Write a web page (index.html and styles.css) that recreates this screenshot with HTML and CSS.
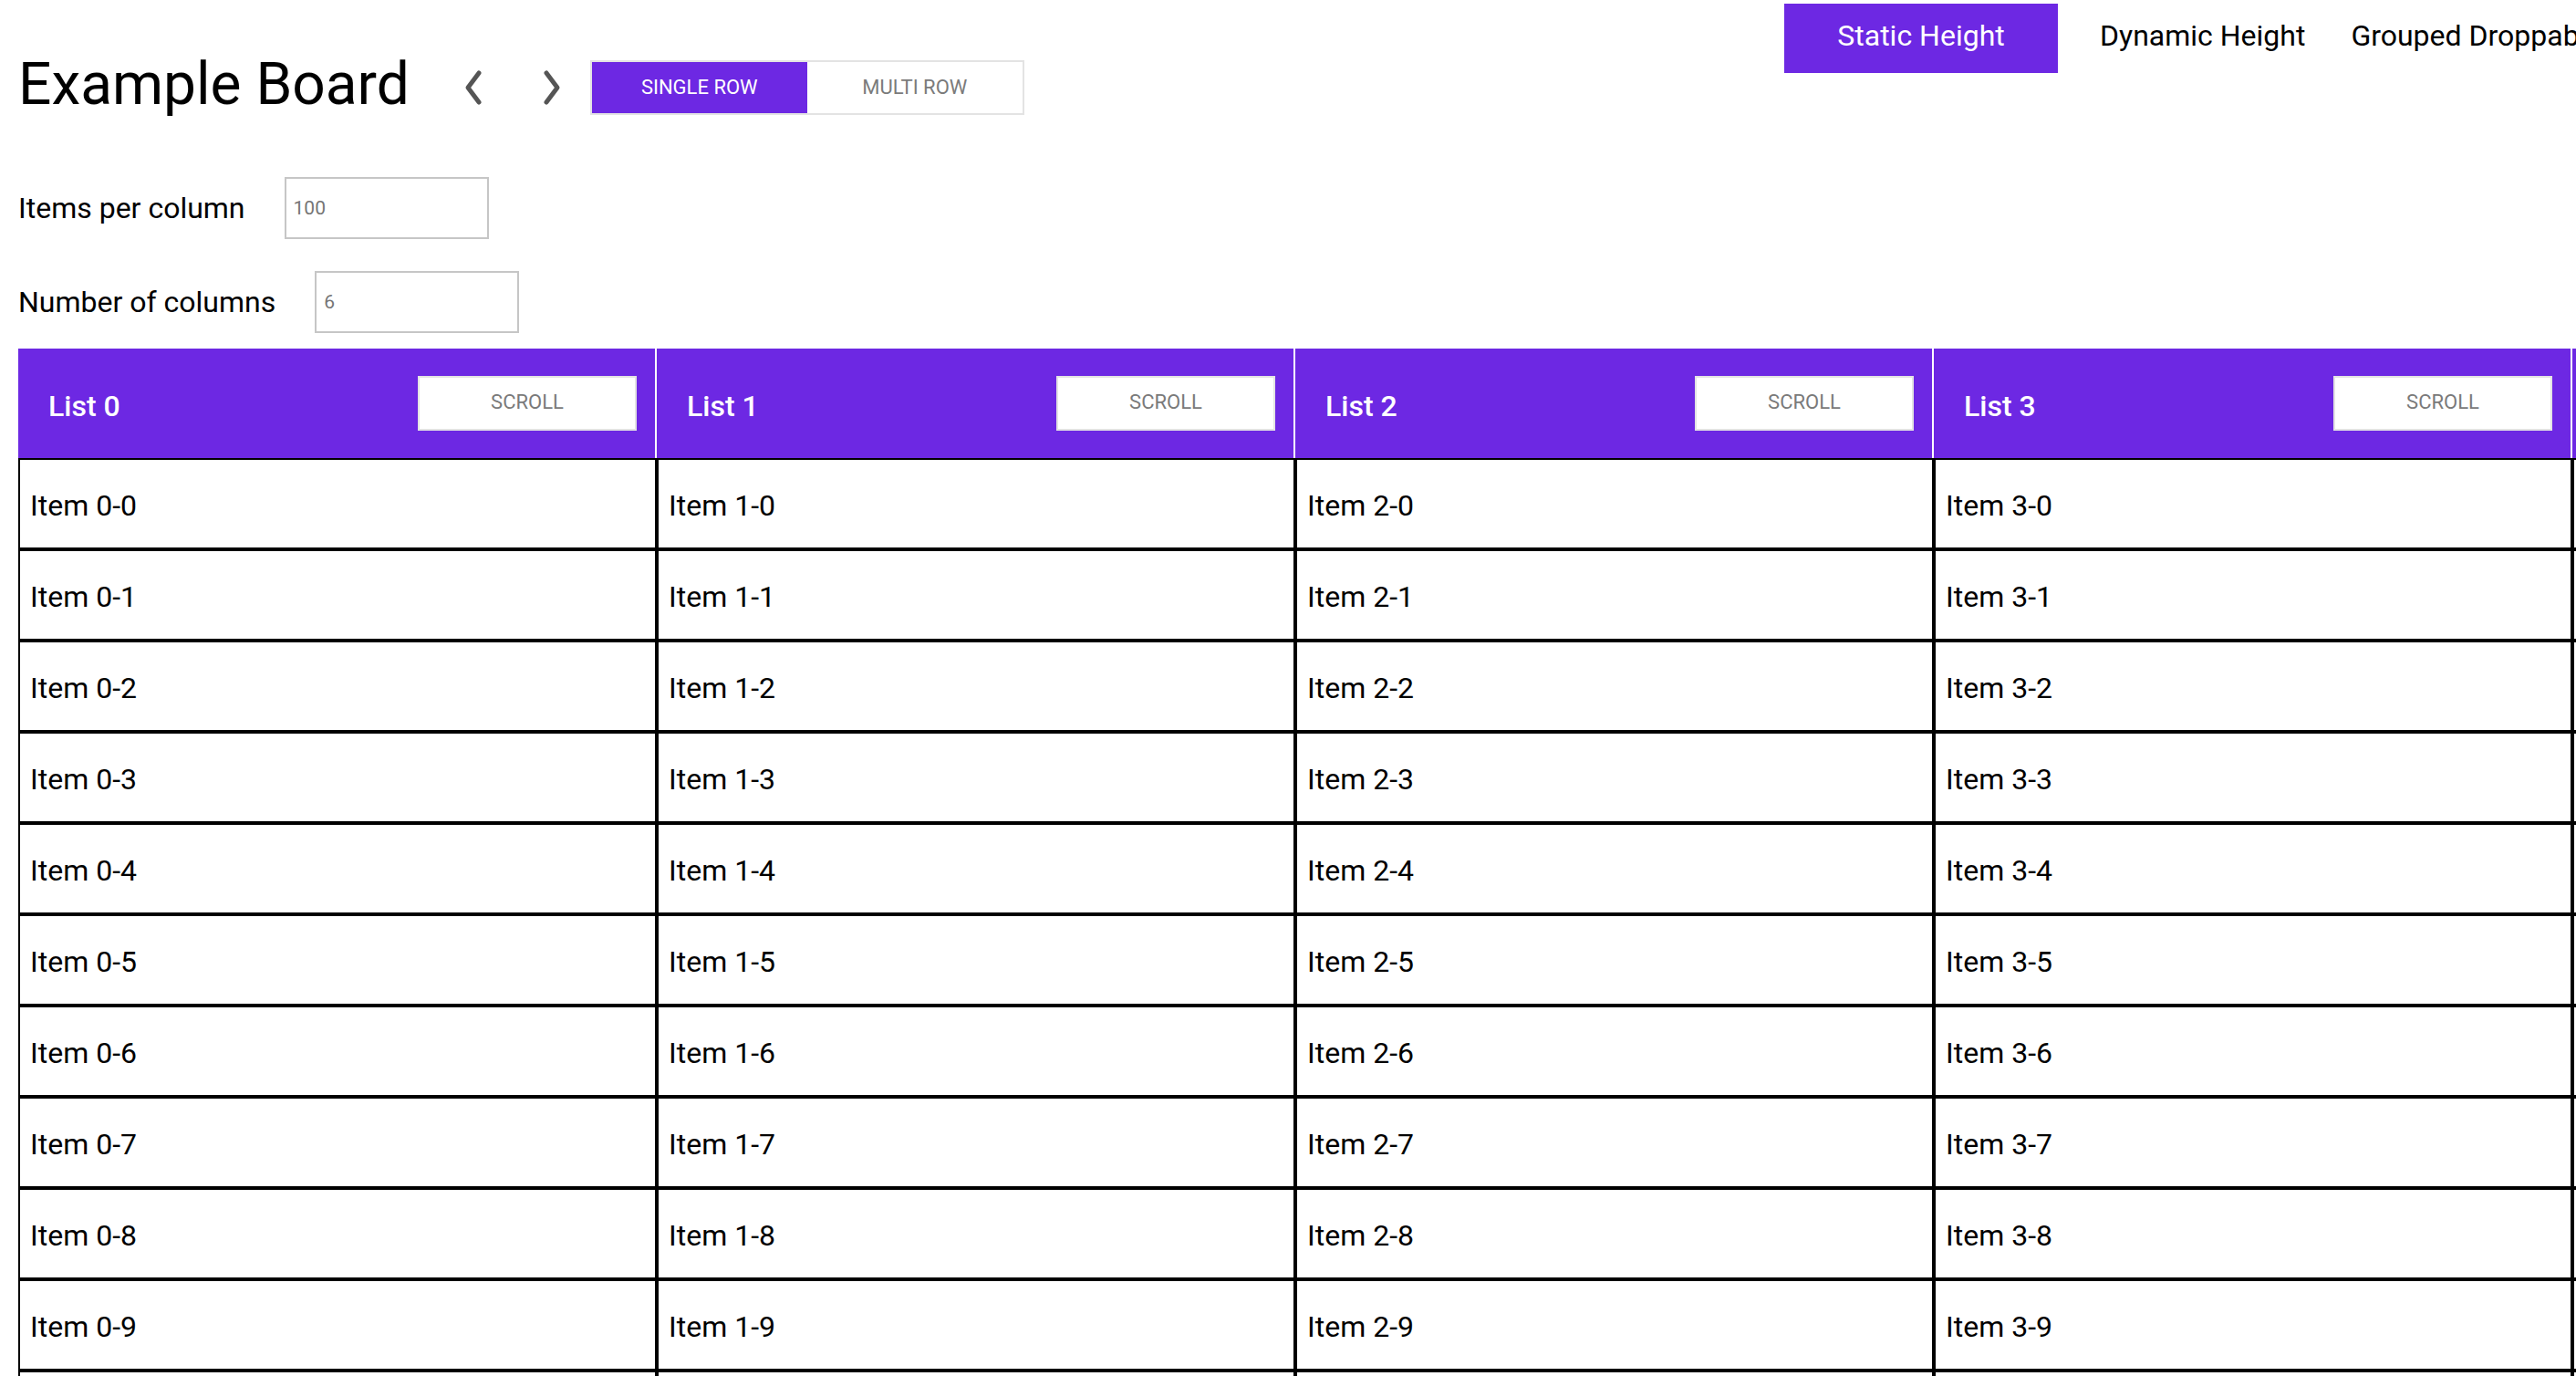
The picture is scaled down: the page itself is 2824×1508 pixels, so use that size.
FILE: index.html
```html
<!DOCTYPE html>
<html lang="en">
<head>
<meta charset="utf-8">
<title>Example Board</title>
<link rel="stylesheet" href="styles.css">
</head>
<body>
<div class="page">
  <header class="top">
    <div class="title-block">
      <div class="title-row">
        <h1 class="title">Example Board</h1>
        <button class="chev chev-prev" aria-label="Previous">
          <svg width="24" height="44" viewBox="0 0 24 44"><polyline points="18,6 6,22 18,38" fill="none" stroke="#555" stroke-width="5" stroke-linecap="round" stroke-linejoin="round"/></svg>
        </button>
        <button class="chev chev-next" aria-label="Next">
          <svg width="24" height="44" viewBox="0 0 24 44"><polyline points="6,6 18,22 6,38" fill="none" stroke="#555" stroke-width="5" stroke-linecap="round" stroke-linejoin="round"/></svg>
        </button>
        <div class="toggle">
          <button class="seg seg-active">Single Row</button>
          <button class="seg">Multi Row</button>
        </div>
      </div>
    </div>
    <nav class="nav">
      <a class="nav-link active">Static Height</a>
      <a class="nav-link">Dynamic Height</a>
      <a class="nav-link">Grouped Droppable</a>
    </nav>
  </header>

  <div class="controls">
    <div class="field-row">
      <span class="field-label">Items per column</span>
      <input class="field" type="text" value="100">
    </div>
    <div class="field-row">
      <span class="field-label">Number of columns</span>
      <input class="field" type="text" value="6">
    </div>
  </div>

  <div class="board">
    <section class="column">
      <div class="col-head"><span class="col-title">List 0</span><button class="scroll-btn">Scroll</button></div>
      <div class="item">Item 0-0</div><div class="item">Item 0-1</div><div class="item">Item 0-2</div><div class="item">Item 0-3</div><div class="item">Item 0-4</div><div class="item">Item 0-5</div><div class="item">Item 0-6</div><div class="item">Item 0-7</div><div class="item">Item 0-8</div><div class="item">Item 0-9</div><div class="item">Item 0-10</div>
    </section>
    <section class="column">
      <div class="col-head"><span class="col-title">List 1</span><button class="scroll-btn">Scroll</button></div>
      <div class="item">Item 1-0</div><div class="item">Item 1-1</div><div class="item">Item 1-2</div><div class="item">Item 1-3</div><div class="item">Item 1-4</div><div class="item">Item 1-5</div><div class="item">Item 1-6</div><div class="item">Item 1-7</div><div class="item">Item 1-8</div><div class="item">Item 1-9</div><div class="item">Item 1-10</div>
    </section>
    <section class="column">
      <div class="col-head"><span class="col-title">List 2</span><button class="scroll-btn">Scroll</button></div>
      <div class="item">Item 2-0</div><div class="item">Item 2-1</div><div class="item">Item 2-2</div><div class="item">Item 2-3</div><div class="item">Item 2-4</div><div class="item">Item 2-5</div><div class="item">Item 2-6</div><div class="item">Item 2-7</div><div class="item">Item 2-8</div><div class="item">Item 2-9</div><div class="item">Item 2-10</div>
    </section>
    <section class="column">
      <div class="col-head"><span class="col-title">List 3</span><button class="scroll-btn">Scroll</button></div>
      <div class="item">Item 3-0</div><div class="item">Item 3-1</div><div class="item">Item 3-2</div><div class="item">Item 3-3</div><div class="item">Item 3-4</div><div class="item">Item 3-5</div><div class="item">Item 3-6</div><div class="item">Item 3-7</div><div class="item">Item 3-8</div><div class="item">Item 3-9</div><div class="item">Item 3-10</div>
    </section>
    <section class="column">
      <div class="col-head"><span class="col-title">List 4</span><button class="scroll-btn">Scroll</button></div>
      <div class="item">Item 4-0</div><div class="item">Item 4-1</div><div class="item">Item 4-2</div><div class="item">Item 4-3</div><div class="item">Item 4-4</div><div class="item">Item 4-5</div><div class="item">Item 4-6</div><div class="item">Item 4-7</div><div class="item">Item 4-8</div><div class="item">Item 4-9</div><div class="item">Item 4-10</div>
    </section>
    <section class="column">
      <div class="col-head"><span class="col-title">List 5</span><button class="scroll-btn">Scroll</button></div>
      <div class="item">Item 5-0</div><div class="item">Item 5-1</div><div class="item">Item 5-2</div><div class="item">Item 5-3</div><div class="item">Item 5-4</div><div class="item">Item 5-5</div><div class="item">Item 5-6</div><div class="item">Item 5-7</div><div class="item">Item 5-8</div><div class="item">Item 5-9</div><div class="item">Item 5-10</div>
    </section>
  </div>
</div>
</body>
</html>
```

FILE: styles.css
```css
* {
  box-sizing: border-box;
}

html,
body {
  margin: 0;
  overflow: hidden;
  background: #fff;
}

body {
  font-family: Roboto, "Liberation Sans", Arial, sans-serif;
  color: #000;
}

.page {
  width: max-content;
  padding-left: 20px;
}

/* ---------- top header ---------- */
.top {
  display: flex;
  align-items: flex-start;
}

.title-block {
  flex: none;
  width: 1936px;
  padding-top: 66px;
}

.title-row {
  display: flex;
  align-items: center;
  height: 60px;
}

.title {
  margin: 0 38px 6px 0;
  font-size: 64px;
  font-weight: 400;
  line-height: 60px;
  white-space: nowrap;
}

.chev {
  flex: none;
  width: 64px;
  height: 60px;
  padding: 0;
  border: 0;
  background: none;
  display: flex;
  align-items: center;
  justify-content: center;
}

.chev-prev {
  margin-right: 22px;
}

.chev-next {
  margin-right: 10px;
}

.toggle {
  display: flex;
  border: 2px solid #e3e3e3;
}

.seg {
  width: 236px;
  height: 56px;
  padding: 0 0 2px;
  border: 0;
  background: #fff;
  color: #7b7b7b;
  font-family: Roboto, "Liberation Sans", Arial, sans-serif;
  font-size: 22px;
  font-weight: 400;
  text-transform: uppercase;
}

.seg-active {
  background: #6d28e3;
  color: #fff;
}

.nav {
  flex: none;
  display: flex;
  margin-top: 4px;
}

.nav-link {
  display: block;
  height: 76px;
  line-height: 70px;
  padding: 0 25px 6px;
  font-size: 32px;
  color: #000;
  white-space: nowrap;
  text-decoration: none;
}

.nav-link.active {
  width: 300px;
  padding: 0 0 6px;
  margin-right: 21px;
  text-align: center;
  background: #6d28e3;
  color: #fff;
}

/* ---------- controls ---------- */
.controls {
  margin-top: 68px;
}

.field-row {
  display: flex;
  align-items: center;
  gap: 43px;
}

.field-row + .field-row {
  margin-top: 35px;
}

.field-label {
  font-size: 32px;
  white-space: nowrap;
}

.field {
  width: 224px;
  height: 68px;
  padding: 0 8px;
  border: 2px solid #c6c6c6;
  font-family: Roboto, "Liberation Sans", Arial, sans-serif;
  font-size: 21px;
  color: #757575;
  background: #fff;
  outline: none;
}

/* ---------- board ---------- */
.board {
  display: flex;
  margin-top: 17px;
}

.column {
  flex: none;
  width: 700px;
}

.col-head {
  height: 120px;
  display: flex;
  align-items: center;
  justify-content: space-between;
  padding: 0 20px 0 33px;
  background: #6d28e3;
  border-right: 2px solid #fff;
  color: #fff;
  font-size: 32px;
  font-weight: 500;
}

.col-title {
  padding-top: 6px;
}

.scroll-btn {
  width: 240px;
  height: 60px;
  padding: 0 0 4px;
  border: 2px solid #e3e3e3;
  background: #fff;
  color: #7a7a7a;
  font-family: Roboto, "Liberation Sans", Arial, sans-serif;
  font-size: 22px;
  font-weight: 400;
  text-transform: uppercase;
}

.item {
  height: 100px;
  display: flex;
  align-items: center;
  padding: 3px 0 0 11px;
  border: 2px solid #000;
  font-size: 32px;
  white-space: nowrap;
}
```
